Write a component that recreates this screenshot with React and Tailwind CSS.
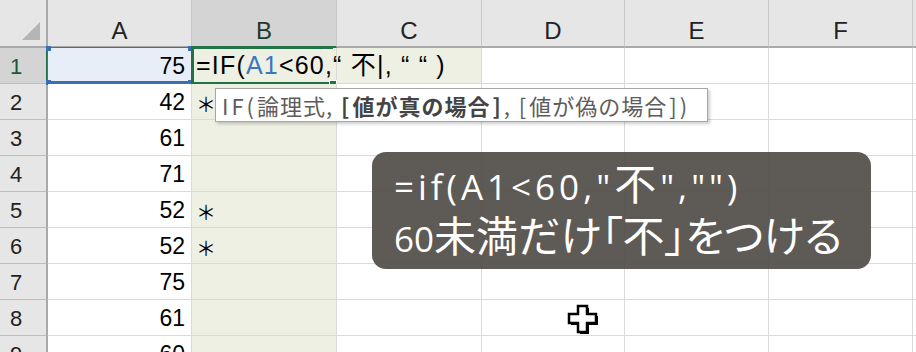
import React from "react";

const cols = ["A", "B", "C", "D", "E", "F"];
const nums = [75, 42, 61, 71, 52, 52, 75, 61, 60];
const stars = { 2: true, 5: true, 6: true };

function Cursor() {
  return (
    <svg width="34" height="32" viewBox="0 0 34 32" className="absolute left-[566px] top-[303px]">
      <path d="M12 3h9v8h9v9h-9v9h-9v-9H3v-9h9z" fill="#000" transform="translate(2,2)" />
      <path d="M12 3h9v8h9v9h-9v9h-9v-9H3v-9h9z" fill="#fff" stroke="#000" strokeWidth="2.5" strokeLinejoin="miter" />
    </svg>
  );
}

const latin = "font-['Open_Sans',sans-serif] text-[35px]";
const br = "px-[2px]";

export default function App() {
  return (
    <div className="relative w-[916px] h-[352px] overflow-hidden bg-white font-['Liberation_Sans',Arial,sans-serif] text-black">
      <div className="grid grid-cols-[48px_144px_145px_145px_143px_144px_144px_3px] grid-rows-[48px_repeat(9,36px)]">
        {/* header row */}
        <div className="relative bg-[#e6e6e6] border-r-2 border-b-2 border-r-[#a9a9a9] border-b-[#a9a9a9]">
          <div className="absolute right-[6px] bottom-[6px] w-0 h-0 border-l-[18px] border-l-transparent border-b-[18px] border-b-[#b5b5b5]" />
        </div>
        {cols.map((c) => (
          <div
            key={c}
            className={`flex items-end justify-center pb-[3px] text-[24px] leading-none border-r border-r-[#c8c8c8] border-b-2 ${
              c === "B" ? "bg-[#d4d4d4] border-b-[#217346] text-[#1f3a2a]" : "bg-[#e6e6e6] border-b-[#a9a9a9] text-[#222]"
            }`}
          >
            {c}
          </div>
        ))}
        <div className="bg-[#e6e6e6] border-b-2 border-b-[#a9a9a9]" />

        {nums.map((n, i) => {
          const r = i + 1;
          return (
            <React.Fragment key={r}>
              <div
                className={`flex items-end pl-[10px] pb-[5px] text-[22px] leading-none border-r-2 border-b border-b-[#bdbdbd] ${
                  r === 1 ? "bg-[#d4d4d4] border-r-[#217346] text-[#1c5a35]" : "bg-[#e6e6e6] border-r-[#a9a9a9] text-[#222]"
                }`}
              >
                {r}
              </div>
              <div
                className={`relative flex items-end justify-end pr-[6px] pb-[5px] text-[23px] leading-none border-r border-b border-[#dadada] ${
                  r === 1 ? "bg-[#e7eef8]" : "bg-white"
                }`}
              >
                {r === 1 && (
                  <div className="absolute -left-px -top-px -right-px -bottom-px border border-b-[3px] border-[#3b6fb5]">
                    <div className="absolute -left-[2px] -top-[2px] w-[5px] h-[5px] bg-[#3b6fb5]" />
                    <div className="absolute -left-[2px] -bottom-[4px] w-[5px] h-[5px] bg-[#3b6fb5]" />
                    <div className="absolute -right-[2px] -top-[2px] w-[5px] h-[5px] bg-[#3b6fb5]" />
                    <div className="absolute -right-[2px] -bottom-[4px] w-[5px] h-[5px] bg-[#3b6fb5]" />
                  </div>
                )}
                <span className="relative">{n}</span>
              </div>
              <div className="relative flex items-end pl-[4px] pb-[5px] text-[23px] leading-none bg-[#eef0e3] border-r border-b border-[#dadada]">
                {r === 1 ? (
                  <>
                    <div className="absolute -left-px -top-[2px] right-[3px] -bottom-[2px] border-[3px] border-r-0 border-[#217346]">
                      <div className="absolute -right-[4px] -bottom-[5px] w-[8px] h-[7px] bg-[#217346] border border-white" />
                    </div>
                    <span className="relative z-10 whitespace-nowrap text-[25px] tracking-[1.2px] leading-none font-['Liberation_Sans','Noto_Sans_CJK_JP',sans-serif]">
                      =IF(<span className="text-[#3b76c2]">A1</span>&lt;60,“ 不<span className="font-light">|</span>, “ “ )
                    </span>
                  </>
                ) : stars[r] ? (
                  <span className="font-['Noto_Sans_CJK_JP',sans-serif] text-[20px]">＊</span>
                ) : null}
              </div>
              <div className={`border-r border-b border-[#dadada] ${r === 1 ? "bg-[#eef0e3]" : "bg-white"}`} />
              <div className="border-r border-b border-[#dadada] bg-white" />
              <div className="border-r border-b border-[#dadada] bg-white" />
              <div className="border-r border-b border-[#dadada] bg-white" />
              <div className="border-b border-[#dadada] bg-white" />
            </React.Fragment>
          );
        })}
      </div>

      {/* tooltip */}
      <div className="absolute left-[215px] top-[88px] w-[493px] h-[34px] bg-white border border-[#a6a6a6] shadow-[2px_2px_3px_rgba(0,0,0,0.2)] flex items-center pl-[6px] text-[22px] tracking-[1px] leading-none text-[#5c5c5c] whitespace-nowrap font-['Noto_Sans_CJK_JP',sans-serif]">
        <span className="tracking-[3px]">IF(</span>論理式,&nbsp;
        <span className="font-bold text-[#444]">
          <span className={br}>[</span>値が真の場合<span className={br}>]</span>
        </span>
        ,&nbsp;<span className={br}>[</span>値が偽の場合<span className={br}>]</span>)
      </div>

      {/* overlay caption */}
      <div className="absolute left-[372px] top-[152px] w-[499px] h-[117px] rounded-[14px] bg-[rgba(82,77,72,0.93)] flex flex-col justify-center pl-[22px] pb-[2px] text-white text-[42px] leading-[47px] font-['Noto_Sans_CJK_JP',sans-serif] [font-feature-settings:'palt'] whitespace-nowrap">
        <div className="tracking-[4px]">
          <span className={latin}>=if(A1&lt;60,"</span>不<span className={latin}>","")</span>
        </div>
        <div>
          <span className={latin}>60</span>未満だけ「不」をつける
        </div>
      </div>

      <Cursor />
    </div>
  );
}
